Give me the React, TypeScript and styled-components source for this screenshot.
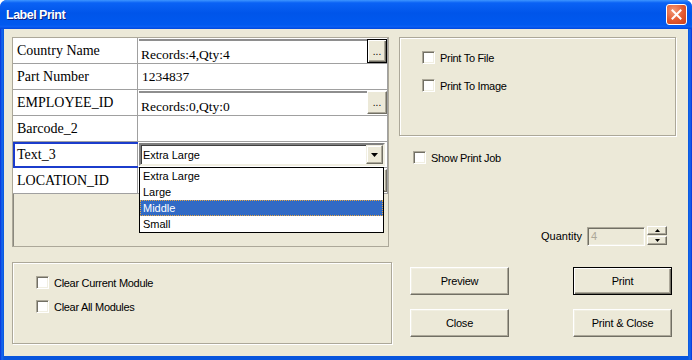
import React from "react";
import styled, { createGlobalStyle, css } from "styled-components";

const GlobalStyle = createGlobalStyle`
  html, body { margin: 0; padding: 0; background: #fff; overflow: hidden; }
  * { box-sizing: border-box; }
`;

const UI = `"Liberation Sans", Arial, sans-serif`;
const SERIF = `"Liberation Serif", "Times New Roman", serif`;

const Window = styled.div`
  width: 692px;
  height: 360px;
  display: flex;
  flex-direction: column;
  border-radius: 7px 7px 0 0;
  overflow: hidden;
  background: #0a48e2;
  font-family: ${UI};
  font-size: 11px;
`;

const TitleBar = styled.div`
  height: 29px;
  flex: none;
  display: flex;
  align-items: center;
  justify-content: space-between;
  padding: 0 5px 0 6px;
  background: linear-gradient(
    to bottom,
    #3d95ff 0%,
    #0a62f5 10%,
    #0055ea 45%,
    #0059ef 85%,
    #0a5ff4 92%,
    #0046dc 100%
  );
`;

const Title = styled.span`
  color: #fff;
  font-family: ${UI};
  font-weight: bold;
  font-size: 12.5px;
  letter-spacing: -0.5px;
  text-shadow: 1px 1px #0a1e80;
  padding-top: 1px;
`;

const CloseBox = styled.div`
  width: 21px;
  height: 21px;
  border: 1px solid #fff;
  border-radius: 3px;
  background: radial-gradient(circle at 35% 30%, #f29a78 0%, #e2582f 55%, #c8401a 100%);
  display: flex;
  align-items: center;
  justify-content: center;
`;

const Frame = styled.div`
  flex: 1;
  display: flex;
  padding: 0 4px 4px 4px;
  background: linear-gradient(to right, #0831d9 0, #166aee 2px, #0855dd 4px, #0855dd 688px, #166aee 690px, #0831d9 692px);
`;

const Client = styled.div`
  flex: 1;
  background: #ece9d8;
  display: grid;
  grid-template-columns: 380px 277px;
  grid-template-rows: 210px 82px;
  column-gap: 7px;
  row-gap: 15px;
  padding: 8px 0 0 8px;
`;

const GridPanel = styled.div`
  width: 377px;
  height: 210px;
  border: 1px solid #aca899;
  box-shadow: inset 1px 1px #8a887e;
  background: #ece9d8;
  display: flex;
  flex-direction: column;
`;

const Row = styled.div<{ $selected?: boolean }>`
  position: relative;
  display: grid;
  grid-template-columns: 125px 250px;
  height: 26px;
  ${(p) =>
    p.$selected &&
    css`
      outline: 2px solid #1b3ccc;
      outline-offset: -2px;
      z-index: 2;
    `}
`;

const LabelCell = styled.div`
  background: #fff;
  border-right: 1px solid #a0a0a0;
  border-bottom: 1px solid #a0a0a0;
  font-family: ${SERIF};
  font-size: 14px;
  color: #000;
  display: flex;
  align-items: center;
  padding: 0 0 0 4px;
  white-space: nowrap;
`;

const ValueCell = styled.div`
  position: relative;
  background: #fff;
  border-right: 1px solid #a0a0a0;
  border-bottom: 1px solid #a0a0a0;
  display: flex;
  align-items: center;
  padding-left: 4px;
  font-family: ${SERIF};
  font-size: 13.5px;
  color: #000;
  white-space: nowrap;
`;

const Lookup = styled.div`
  position: absolute;
  inset: 1px 0 0 1px;
  display: flex;
  align-items: stretch;
  border-top: 2px solid #8e8e8e;
  background: #fff;
`;

const LookupText = styled.div`
  flex: 1;
  padding: 6px 0 0 2px;
  font-family: ${SERIF};
  font-size: 13.5px;
  color: #000;
`;

const DotsButton = styled.div<{ $default?: boolean }>`
  width: 20px;
  margin-top: -2px;
  margin-bottom: ${(p) => (p.$default ? "0" : "1px")};
  background: #ece9d8;
  display: flex;
  align-items: flex-end;
  justify-content: center;
  padding-bottom: 6px;
  font-family: ${UI};
  font-size: 10px;
  line-height: 8px;
  color: #000;
  border: 1px solid;
  border-color: #fff #716f64 #716f64 #fff;
  box-shadow: inset -1px -1px #aca899;
  ${(p) =>
    p.$default &&
    css`
      border: 1px solid #000;
      box-shadow: inset 1px 1px #fff, inset -1px -1px #716f64, inset -2px -2px #aca899;
    `}
`;

const Combo = styled.div`
  position: absolute;
  left: 1px;
  top: 1px;
  width: 246px;
  height: 23px;
  background: #fff;
  border: 2px solid;
  border-color: #808080 #f1efe2 #f1efe2 #808080;
  box-shadow: inset 1px 1px #404040;
  display: flex;
  align-items: center;
  justify-content: space-between;
  font-family: ${UI};
  font-size: 11px;
  color: #000;
  padding-left: 2px;
`;

const ComboArrow = styled.div`
  width: 17px;
  height: 19px;
  background: #ece9d8;
  border: 1px solid;
  border-color: #f1efe2 #716f64 #716f64 #f1efe2;
  box-shadow: inset -1px -1px #aca899, inset 1px 1px #fff;
  display: flex;
  align-items: center;
  justify-content: center;
`;

const DropList = styled.div`
  position: absolute;
  left: 1px;
  top: 25px;
  width: 245px;
  background: #fff;
  border: 1px solid #000;
  z-index: 5;
  font-family: ${UI};
  font-size: 11px;
`;

const DropItem = styled.div<{ $active?: boolean }>`
  height: 16px;
  line-height: 16px;
  padding-left: 3px;
  color: ${(p) => (p.$active ? "#fff" : "#000")};
  background: ${(p) => (p.$active ? "#316ac5" : "#fff")};
  ${(p) =>
    p.$active &&
    css`
      outline: 1px dotted #e8a640;
      outline-offset: -1px;
    `}
`;

const Etched = styled.div`
  border: 1px solid #aca899;
  box-shadow: inset 1px 1px #fff, 1px 1px #fff;
`;

const OptionsPanel = styled(Etched)`
  height: 99px;
  display: flex;
  flex-direction: column;
  gap: 15px;
  padding: 13px 0 0 22px;
`;

const RightColumn = styled.div`
  display: flex;
  flex-direction: column;
`;

const ShowJob = styled.div`
  margin-top: 15px;
  padding-left: 14px;
`;

const CheckRow = styled.label`
  display: flex;
  align-items: center;
  gap: 5px;
  height: 13px;
  font-family: ${UI};
  font-size: 11px;
  letter-spacing: -0.3px;
  color: #000;
`;

const CheckBox = styled.span`
  width: 13px;
  height: 13px;
  flex: none;
  background: #fff;
  border: 1px solid;
  border-color: #aca899 #fff #fff #aca899;
  box-shadow: inset 1px 1px #716f64, inset -1px -1px #f1efe2;
`;

const QuantityRow = styled.div`
  margin-top: auto;
  margin-bottom: 1px;
  margin-right: 9px;
  align-self: flex-end;
  display: flex;
  align-items: center;
  gap: 5px;
  font-family: ${UI};
  font-size: 11px;
  color: #000;
`;

const QtyInput = styled.div`
  width: 58px;
  height: 19px;
  background: #ece9d8;
  border: 1px solid;
  border-color: #aca899 #fff #fff #aca899;
  box-shadow: inset 1px 1px #716f64, inset -1px -1px #f1efe2;
  color: #aca899;
  padding: 2px 0 0 3px;
  font-size: 11px;
`;

const Spin = styled.div`
  display: flex;
  flex-direction: column;
  margin-left: -3px;
`;

const SpinButton = styled.div`
  width: 20px;
  height: 9px;
  margin-bottom: 1px;
  background: #ece9d8;
  border: 1px solid;
  border-color: #fff #716f64 #716f64 #fff;
  box-shadow: inset -1px -1px #aca899;
  display: flex;
  align-items: center;
  justify-content: center;
`;

const ModulesPanel = styled(Etched)`
  height: 82px;
  display: flex;
  flex-direction: column;
  gap: 11px;
  padding: 13px 0 0 23px;
`;

const ButtonGrid = styled.div`
  display: grid;
  grid-template-columns: 99px 99px;
  grid-auto-rows: 28px;
  column-gap: 64px;
  row-gap: 14px;
  padding: 5px 0 0 11px;
  align-content: start;
`;

const Button = styled.button<{ $default?: boolean }>`
  background: #ece9d8;
  font-family: ${UI};
  font-size: 11px;
  letter-spacing: -0.2px;
  color: #000;
  padding: 0;
  border: 1px solid;
  border-color: #fff #716f64 #716f64 #fff;
  box-shadow: inset -1px -1px #aca899, inset 1px 1px #f1efe2;
  ${(p) =>
    p.$default &&
    css`
      border: 1px solid #000;
      box-shadow: inset 1px 1px #fff, inset -1px -1px #716f64, inset -2px -2px #aca899;
    `}
`;

type Field = {
  name: string;
  kind: "lookup" | "text" | "combo";
  value: string;
  focused?: boolean;
};

const fields: Field[] = [
  { name: "Country Name", kind: "lookup", value: "Records:4,Qty:4", focused: true },
  { name: "Part Number", kind: "text", value: "1234837" },
  { name: "EMPLOYEE_ID", kind: "lookup", value: "Records:0,Qty:0" },
  { name: "Barcode_2", kind: "text", value: "" },
  { name: "Text_3", kind: "combo", value: "Extra Large" },
  { name: "LOCATION_ID", kind: "lookup", value: "" },
];

const sizes = ["Extra Large", "Large", "Middle", "Small"];

function Check({ label }: { label: string }) {
  return (
    <CheckRow>
      <CheckBox />
      <span>{label}</span>
    </CheckRow>
  );
}

function FieldRow({ field }: { field: Field }) {
  return (
    <Row $selected={field.kind === "combo"}>
      <LabelCell>{field.name}</LabelCell>
      <ValueCell>
        {field.kind === "text" && field.value}
        {field.kind === "lookup" && (
          <Lookup>
            <LookupText>{field.value}</LookupText>
            <DotsButton $default={field.focused}>...</DotsButton>
          </Lookup>
        )}
        {field.kind === "combo" && (
          <>
            <Combo>
              <span>{field.value}</span>
              <ComboArrow>
                <svg width="7" height="4" viewBox="0 0 7 4">
                  <path d="M0 0h7L3.5 4z" fill="#000" />
                </svg>
              </ComboArrow>
            </Combo>
            <DropList>
              {sizes.map((s) => (
                <DropItem key={s} $active={s === "Middle"}>
                  {s}
                </DropItem>
              ))}
            </DropList>
          </>
        )}
      </ValueCell>
    </Row>
  );
}

export default function App() {
  return (
    <>
      <GlobalStyle />
      <Window>
        <TitleBar>
          <Title>Label Print</Title>
          <CloseBox>
            <svg width="11" height="11" viewBox="0 0 11 11">
              <path d="M1.5 1.5l8 8M9.5 1.5l-8 8" stroke="#fff" strokeWidth="2" strokeLinecap="square" />
            </svg>
          </CloseBox>
        </TitleBar>
        <Frame>
          <Client>
            <GridPanel>
              {fields.map((f) => (
                <FieldRow key={f.name} field={f} />
              ))}
            </GridPanel>

            <RightColumn>
              <OptionsPanel>
                <Check label="Print To File" />
                <Check label="Print To Image" />
              </OptionsPanel>
              <ShowJob>
                <Check label="Show Print Job" />
              </ShowJob>
              <QuantityRow>
                <span>Quantity</span>
                <QtyInput>4</QtyInput>
                <Spin>
                  <SpinButton>
                    <svg width="5" height="3" viewBox="0 0 5 3">
                      <path d="M2.5 0L5 3H0z" fill="#000" />
                    </svg>
                  </SpinButton>
                  <SpinButton>
                    <svg width="5" height="3" viewBox="0 0 5 3">
                      <path d="M0 0h5L2.5 3z" fill="#000" />
                    </svg>
                  </SpinButton>
                </Spin>
              </QuantityRow>
            </RightColumn>

            <ModulesPanel>
              <Check label="Clear Current Module" />
              <Check label="Clear All Modules" />
            </ModulesPanel>

            <ButtonGrid>
              <Button>Preview</Button>
              <Button $default>Print</Button>
              <Button>Close</Button>
              <Button>Print &amp; Close</Button>
            </ButtonGrid>
          </Client>
        </Frame>
      </Window>
    </>
  );
}
